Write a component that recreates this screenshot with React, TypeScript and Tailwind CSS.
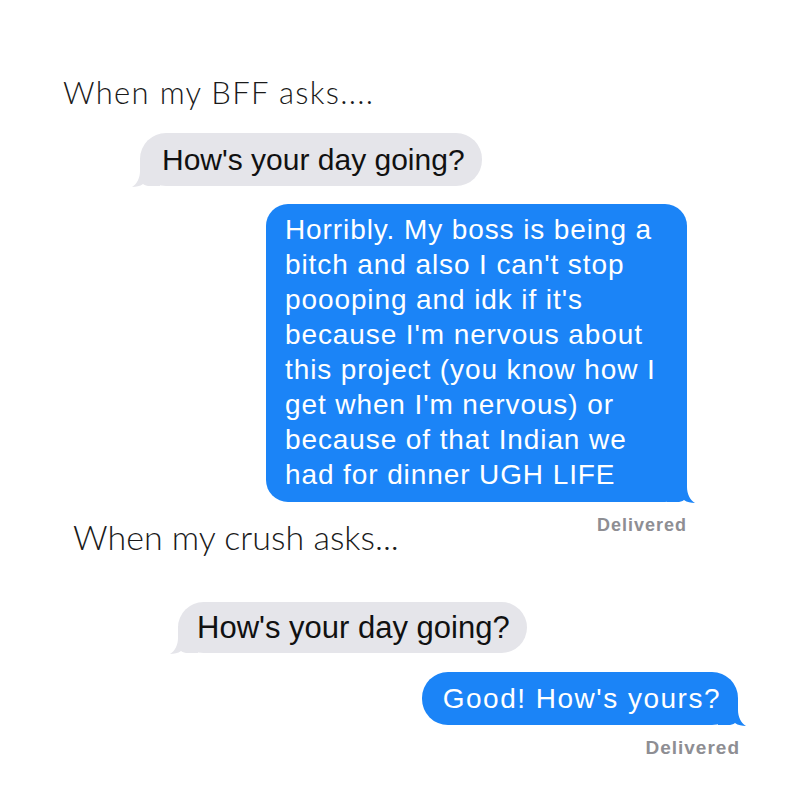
import React from "react";

const GREY = "#e5e5ea";
const BLUE = "#1b84f7";

function LeftTail({ color }: { color: string }) {
  return (
    <svg
      className="absolute left-[-8px] bottom-[-1px]"
      width="28"
      height="28"
      viewBox="0 0 28 28"
    >
      <path
        d="M8,0 H28 V27 H18 C15,27 13,26.5 11,25 C8,27.3 4,28 0,28 C5,25 8,19 8,12 Z"
        fill={color}
      />
    </svg>
  );
}

function RightTail({ color }: { color: string }) {
  return (
    <svg
      className="absolute right-[-8px] bottom-[-1px]"
      width="28"
      height="28"
      viewBox="0 0 28 28"
    >
      <path
        d="M20,0 H0 V27 H10 C13,27 15,26.5 17,25 C20,27.3 24,28 28,28 C23,25 20,19 20,12 Z"
        fill={color}
      />
    </svg>
  );
}

export default function App() {
  const bubbleFont = { fontFamily: '"Liberation Sans", Arial, sans-serif' };
  return (
    <div className="w-[800px] h-[800px] bg-white overflow-hidden flex flex-col">
      <div
        className="ml-[63px] mt-[74px] h-[36px] leading-[36px] text-[31px] font-light tracking-[1.3px] text-[#1a1a1a]"
        style={{ fontFamily: "Lato, sans-serif" }}
      >
        When my BFF asks....
      </div>

      <div className="ml-[140px] mt-[23px] flex">
        <div
          className="relative h-[53px] leading-[53px] rounded-[26px] pl-[22px] pr-[17px] text-[30px] text-[#111]"
          style={{ ...bubbleFont, backgroundColor: GREY }}
        >
          How's your day going?
          <LeftTail color={GREY} />
        </div>
      </div>

      <div className="ml-[266px] mt-[18px] flex">
        <div
          className="relative w-[421px] rounded-[22px] pl-[19px] pr-[10px] pt-[8px] pb-[10px] text-[28px] leading-[35px] tracking-[0.9px] text-white"
          style={{ ...bubbleFont, backgroundColor: BLUE }}
        >
          Horribly. My boss is being a<br />
          bitch and also I can't stop<br />
          poooping and idk if it's<br />
          because I'm nervous about<br />
          this project (you know how I<br />
          get when I'm nervous) or<br />
          because of that Indian we<br />
          had for dinner UGH LIFE
          <RightTail color={BLUE} />
        </div>
      </div>

      <div className="flex items-start mt-[11px]">
        <div
          className="ml-[73px] mt-[4px] h-[40px] leading-[40px] text-[34px] font-light text-[#1a1a1a]"
          style={{ fontFamily: "Lato, sans-serif" }}
        >
          When my crush asks...
        </div>
        <div className="flex-1" />
        <div
          className="mr-[113px] text-[18px] leading-[24px] font-bold tracking-[1px] text-[#8e8e93]"
          style={bubbleFont}
        >
          Delivered
        </div>
      </div>

      <div className="ml-[178px] mt-[45px] flex">
        <div
          className="relative h-[51px] leading-[51px] rounded-[26px] pl-[19px] pr-[17px] text-[31px] text-[#111]"
          style={{ ...bubbleFont, backgroundColor: GREY }}
        >
          How's your day going?
          <LeftTail color={GREY} />
        </div>
      </div>

      <div className="mt-[19px] flex justify-end pr-[62px]">
        <div
          className="relative h-[53px] leading-[53px] rounded-[26px] pl-[21px] pr-[17px] text-[28px] tracking-[1.5px] text-white"
          style={{ ...bubbleFont, backgroundColor: BLUE }}
        >
          Good! How's yours?
          <RightTail color={BLUE} />
        </div>
      </div>

      <div className="mt-[11px] flex justify-end pr-[60px]">
        <div
          className="text-[19px] leading-[24px] font-bold tracking-[1px] text-[#8e8e93]"
          style={bubbleFont}
        >
          Delivered
        </div>
      </div>
    </div>
  );
}
